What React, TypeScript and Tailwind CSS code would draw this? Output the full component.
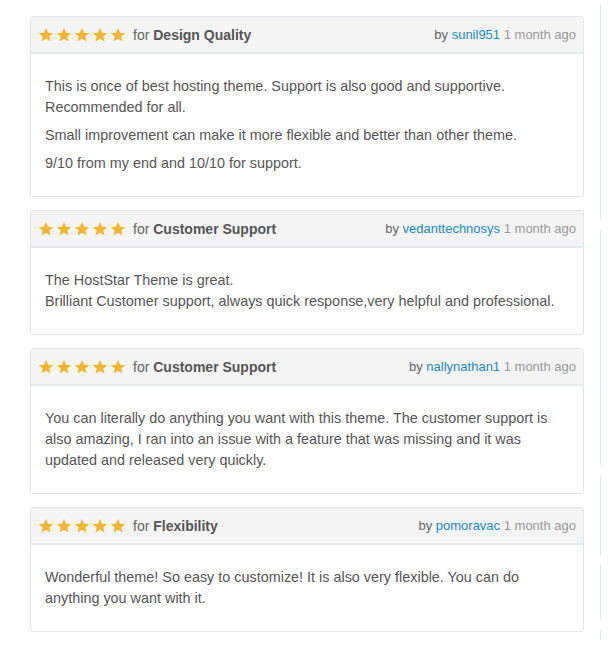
import React from 'react';

type Review = {
  topic: string;
  author: string;
  when: string;
  paragraphs: string[][];
};

const reviews: Review[] = [
  {
    topic: 'Design Quality',
    author: 'sunil951',
    when: '1 month ago',
    paragraphs: [
      ['This is once of best hosting theme. Support is also good and supportive.', 'Recommended for all.'],
      ['Small improvement can make it more flexible and better than other theme.'],
      ['9/10 from my end and 10/10 for support.'],
    ],
  },
  {
    topic: 'Customer Support',
    author: 'vedanttechnosys',
    when: '1 month ago',
    paragraphs: [
      ['The HostStar Theme is great.', 'Brilliant Customer support, always quick response,very helpful and professional.'],
    ],
  },
  {
    topic: 'Customer Support',
    author: 'nallynathan1',
    when: '1 month ago',
    paragraphs: [
      [
        'You can literally do anything you want with this theme. The customer support is',
        'also amazing, I ran into an issue with a feature that was missing and it was',
        'updated and released very quickly.',
      ],
    ],
  },
  {
    topic: 'Flexibility',
    author: 'pomoravac',
    when: '1 month ago',
    paragraphs: [['Wonderful theme! So easy to customize! It is also very flexible. You can do', 'anything you want with it.']],
  },
];

function Stars() {
  return (
    <div className="flex items-center gap-[2px]">
      {[0, 1, 2, 3, 4].map((i) => (
        <svg key={i} width="16" height="16" viewBox="0 0 24 24" className="block">
          <path
            d="M12 1.5l3.1 7.1 7.6.6-5.8 5 1.8 7.5L12 17.7l-6.7 4 1.8-7.5-5.8-5 7.6-.6z"
            fill="#f4b52c"
          />
        </svg>
      ))}
    </div>
  );
}

function ReviewCard({ review }: { review: Review }) {
  return (
    <div className="border border-[#e2e6ea] rounded-[3px] bg-white">
      <div className="flex items-center justify-between h-[37px] pt-px pl-[7px] pr-[7px] bg-[#f4f4f4] border-b-2 border-[#e6e9ec] rounded-t-[3px]">
        <div className="flex items-center gap-[7px] text-[14px] text-[#666]">
          <Stars />
          <span>
            for <b className="font-bold text-[#555]">{review.topic}</b>
          </span>
        </div>
        <div className="text-[13px] text-[#666]">
          by <span className="text-[#1a8bbf]">{review.author}</span>{' '}
          <span className="text-[#999]">{review.when}</span>
        </div>
      </div>
      <div className="px-[14px] pt-[22px] pb-[15px] text-[14.4px] leading-[21px] text-[#555]">
        {review.paragraphs.map((lines, i) => (
          <p key={i} className="mb-[7px]">
            {lines.map((l, j) => (
              <React.Fragment key={j}>
                {l}
                {j < lines.length - 1 && <br />}
              </React.Fragment>
            ))}
          </p>
        ))}
      </div>
    </div>
  );
}

export default function App() {
  return (
    <div className="w-[615px] h-[650px] bg-white font-['Liberation_Sans',Arial,sans-serif] flex overflow-hidden">
      <div className="w-[554px] ml-[30px] mt-[16px] flex flex-col gap-[13px]">
        {reviews.map((r, i) => (
          <ReviewCard key={i} review={r} />
        ))}
      </div>
      <div className="ml-[16px] mt-[5px] flex flex-col gap-[10px]">
        <div className="w-px h-[215px] bg-[#e1e7ee]" />
        <div className="w-px h-[235px] bg-[#e1e7ee]" />
        <div className="w-px h-[80px] bg-[#e1e7ee]" />
        <div className="w-px h-[55px] bg-[#e1e7ee]" />
        <div className="w-px h-[10px] bg-[#e1e7ee]" />
      </div>
    </div>
  );
}
